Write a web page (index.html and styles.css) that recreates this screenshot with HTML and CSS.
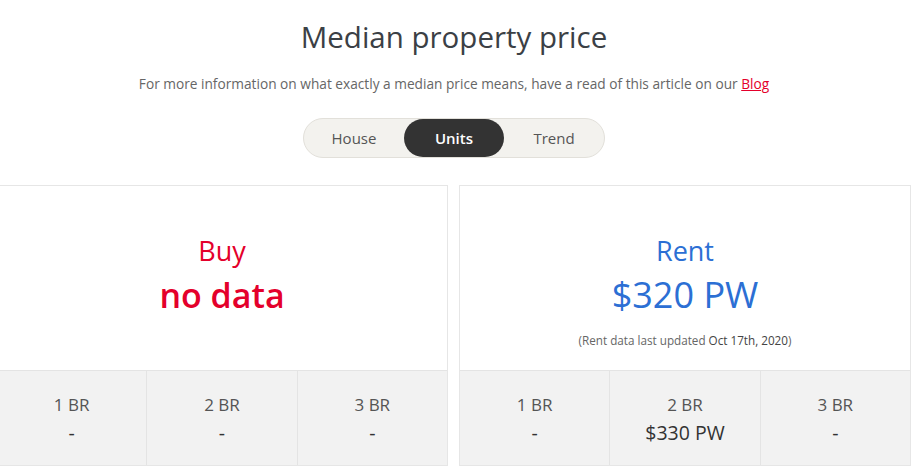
FILE: index.html
```html
<!DOCTYPE html>
<html lang="en">
<head>
    <meta charset="UTF-8">
    <meta name="viewport" content="width=device-width, initial-scale=1.0">
    <title>Median property price</title>
    <link rel="stylesheet" href="styles.css">
</head>
<body>
    <div class="container">
        <h1>Median property price</h1>
        <p class="intro">For more information on what exactly a median price means, have a read of this article on our <a href="#">Blog</a></p>

        <div class="toggle">
            <button class="toggle-btn">House</button>
            <button class="toggle-btn active">Units</button>
            <button class="toggle-btn">Trend</button>
        </div>

        <div class="cards">
            <div class="price-card">
                <div class="price-main buy">
                    <div class="price-label">Buy</div>
                    <div class="price-value">no data</div>
                </div>
                <div class="bedrooms">
                    <div class="br-cell">
                        <div class="br-label">1 BR</div>
                        <div class="br-value">-</div>
                    </div>
                    <div class="br-cell">
                        <div class="br-label">2 BR</div>
                        <div class="br-value">-</div>
                    </div>
                    <div class="br-cell">
                        <div class="br-label">3 BR</div>
                        <div class="br-value">-</div>
                    </div>
                </div>
            </div>

            <div class="price-card">
                <div class="price-main rent">
                    <div class="price-label">Rent</div>
                    <div class="price-value">$320 PW</div>
                    <div class="price-note">(Rent data last updated <span>Oct 17th, 2020</span>)</div>
                </div>
                <div class="bedrooms">
                    <div class="br-cell">
                        <div class="br-label">1 BR</div>
                        <div class="br-value">-</div>
                    </div>
                    <div class="br-cell">
                        <div class="br-label">2 BR</div>
                        <div class="br-value">$330 PW</div>
                    </div>
                    <div class="br-cell">
                        <div class="br-label">3 BR</div>
                        <div class="br-value">-</div>
                    </div>
                </div>
            </div>
        </div>
    </div>
</body>
</html>
```

FILE: styles.css
```css
body {
    font-family: "Open Sans", "Noto Sans", sans-serif;
    margin: 0;
    background-color: white;
    color: #3c4146;
    overflow: hidden;
}

.container {
    width: 908px;
    padding-top: 18px;
    text-align: center;
}

h1 {
    font-size: 29.5px;
    font-weight: 400;
    margin: 0;
    line-height: 38px;
    color: #3b4045;
}

.intro {
    font-size: 13.7px;
    color: #666;
    margin: 18px 0 0;
    line-height: 20px;
}

.intro a {
    color: #e4002b;
}

.toggle {
    display: inline-flex;
    margin-top: 24px;
    background-color: #f3f2ee;
    border: 1px solid #e2e0da;
    border-radius: 20px;
}

.toggle-btn {
    width: 100px;
    height: 38px;
    border: none;
    background: none;
    border-radius: 19px;
    font-family: inherit;
    font-size: 15px;
    color: #555;
    cursor: pointer;
}

.toggle-btn.active {
    background-color: #333;
    color: white;
    font-weight: 600;
}

.cards {
    display: flex;
    gap: 11px;
    margin-left: -4px;
    margin-top: 27px;
}

.price-card {
    width: 452px;
    flex-shrink: 0;
    border: 1px solid #e6e6e6;
    box-sizing: border-box;
}

.price-main {
    height: 184px;
    padding-top: 47px;
    box-sizing: border-box;
}

.price-main.buy {
    color: #e4002b;
}

.price-main.rent {
    color: #2c6fd4;
}

.price-label {
    font-size: 27px;
    line-height: 36px;
}

.price-value {
    font-size: 36px;
    line-height: 46px;
    margin-top: 3px;
}

.buy .price-value {
    font-size: 34px;
    font-weight: 600;
}

.price-note {
    font-size: 11.7px;
    color: #666;
    margin-top: 14px;
}

.price-note span {
    color: #444;
}

.bedrooms {
    display: flex;
    background-color: #f2f2f2;
    border-top: 1px solid #e4e4e4;
    height: 94px;
}

.br-cell {
    flex: 1;
    padding-top: 22px;
    border-left: 1px solid #e4e4e4;
}

.br-cell:first-child {
    border-left: none;
}

.br-label {
    font-size: 17px;
    color: #555;
    line-height: 24px;
}

.br-value {
    font-size: 19.5px;
    color: #333;
    line-height: 28px;
    margin-top: 2px;
}
```
